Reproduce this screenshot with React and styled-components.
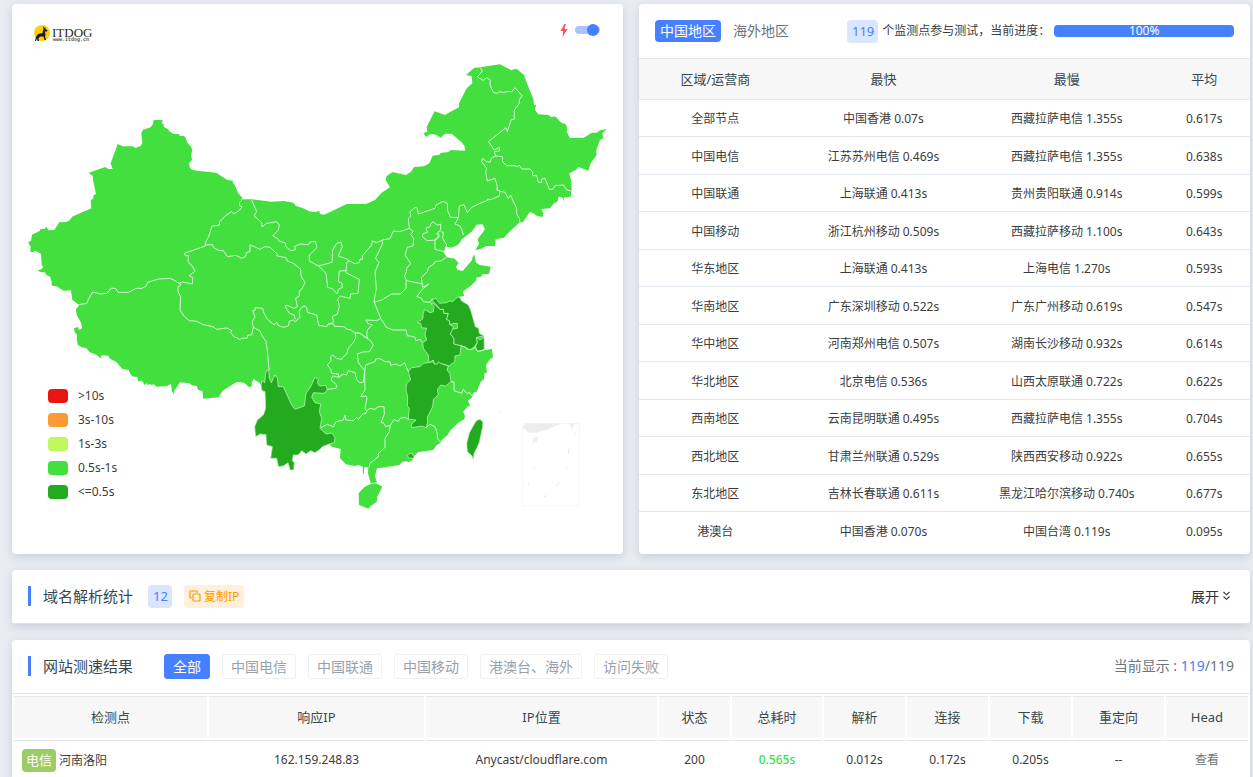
import React, { useState } from "react";
import styled, { createGlobalStyle } from "styled-components";

const regions = [
  ["全部节点", "中国香港 0.07s", "西藏拉萨电信 1.355s", "0.617s"],
  ["中国电信", "江苏苏州电信 0.469s", "西藏拉萨电信 1.355s", "0.638s"],
  ["中国联通", "上海联通 0.413s", "贵州贵阳联通 0.914s", "0.599s"],
  ["中国移动", "浙江杭州移动 0.509s", "西藏拉萨移动 1.100s", "0.643s"],
  ["华东地区", "上海联通 0.413s", "上海电信 1.270s", "0.593s"],
  ["华南地区", "广东深圳移动 0.522s", "广东广州移动 0.619s", "0.547s"],
  ["华中地区", "河南郑州电信 0.507s", "湖南长沙移动 0.932s", "0.614s"],
  ["华北地区", "北京电信 0.536s", "山西太原联通 0.722s", "0.622s"],
  ["西南地区", "云南昆明联通 0.495s", "西藏拉萨电信 1.355s", "0.704s"],
  ["西北地区", "甘肃兰州联通 0.529s", "陕西西安移动 0.922s", "0.655s"],
  ["东北地区", "吉林长春联通 0.611s", "黑龙江哈尔滨移动 0.740s", "0.677s"],
  ["港澳台", "中国香港 0.070s", "中国台湾 0.119s", "0.095s"],
];

const legend = [
  { color: "#e81512", text: ">10s" },
  { color: "#f99a35", text: "3s-10s" },
  { color: "#bff75f", text: "1s-3s" },
  { color: "#42df3f", text: "0.5s-1s" },
  { color: "#24aa1e", text: "<=0.5s" },
];

const filters = ["全部", "中国电信", "中国联通", "中国移动", "港澳台、海外", "访问失败"];

const resultColumns = [
  { title: "检测点", width: 193 },
  { title: "响应IP", width: 215 },
  { title: "IP位置", width: 231 },
  { title: "状态", width: 71 },
  { title: "总耗时", width: 90 },
  { title: "解析", width: 81 },
  { title: "连接", width: 81 },
  { title: "下载", width: 81 },
  { title: "重定向", width: 91 },
  { title: "Head", width: 82 },
];

// The map is stored in sheets, each with its own origin.
const sheets = {
  a: [36, 330],
  b: [600, 540],
  c: [1200, 165],
  d: [1140, 600],
  e: [180, 810],
  f: [720, 990],
  g: [1140, 990],
};

// trace("a", "1,2 3,4", "b", "5,6") joins pieces of several sheets to one line
const trace = (...parts) => {
  const points = [];
  for (let i = 0; i < parts.length; i += 2) {
    const [dx, dy] = sheets[parts[i]];
    parts[i + 1].split(" ").forEach((pair) => {
      const [x, y] = pair.split(",").map(Number);
      points.push(`${x + dx},${y + dy}`);
    });
  }
  return points.join(" ");
};

const mainland = trace(
  "a",
  "692,265 678,248 668,224 664,222 662,212 645,209 612,188 555,182 537,178 532,168 532,158 540,150 537,135 541,122 538,112 526,98 520,82 515,77 504,78 500,72 484,72 472,64 468,58 455,50 455,42 449,40 452,30 425,30 423,42 416,52 392,60 388,70 391,98 386,108 370,114 362,109 332,109 317,102 296,160 302,177 289,177 280,171 230,188 242,198 244,215 252,252 244,256 244,266 236,270 238,295 180,320 174,330 163,336 142,337 127,360 109,361 104,350 97,357 86,356 84,362 60,374 57,392 48,397 56,410 55,425 63,427 70,422 87,431 89,465 94,470 88,478 77,481 86,487 99,487 103,495 114,500 119,515 119,527 134,529 155,542 176,541",
  "e",
  "33,62 37,90 58,105 48,118 50,135 64,160 66,175 58,180 53,171 42,175 44,186 51,195 50,208 54,225 65,232 80,235 88,246 110,255 122,265 125,256 145,257 148,265 170,277 187,297 206,300 212,314 220,320 232,320 234,333 246,332 254,345 260,340 265,346 270,341 276,346 280,342 290,350 322,348 333,341 336,365 341,372 343,362 360,337 388,340 396,346 411,348 414,360 427,363 430,386 476,382 488,362 530,336 552,338 568,352 576,348 575,338 581,327 598,338",
  "f",
  "63,165 66,182 75,185 77,235 70,255 52,270 44,290 47,320 60,312 78,314 80,345 97,350 92,385 110,385 115,410 130,408 144,398 150,420 161,420 163,398 157,392 160,375 175,375 185,362 198,372 212,362 225,368 240,358 247,350 268,342 275,350 302,357 300,385 318,403 345,408 356,405 368,410 369,432 371,432 373,412 385,412 384,430 392,460 411,458 405,438 411,415 435,412 460,408 478,405 488,395 500,394 506,397 517,391 522,378 535,366 555,364 580,360 590,345 600,340",
  "g",
  "180,340 185,330 203,315 210,302 235,278 252,268 255,258 250,245 262,230 270,227 264,212 275,203 280,188 290,185 302,155 312,148 313,130 321,128 318,105 330,88 339,82 336,57",
  "d",
  "313,450 312,408 298,400 296,385 286,380 272,330 265,315 245,303 238,290 253,288 248,275 275,255 290,240 288,233 303,230 308,222 327,222 332,200 300,195 288,188 283,163 278,172 275,182 255,205 248,213 232,209 228,200 236,190 224,176 200,172 190,155 200,140 212,143 228,138 240,128 245,118 275,95 290,74 308,73 315,88 293,118 297,132 286,150 300,148 320,138 345,138 347,118 372,113 385,98 418,68",
  "c",
  "370,500 390,470 402,476 410,482 428,486 430,475 424,462 450,460 462,445 472,440 476,425 485,426 495,441 490,428 512,425 515,405 514,380 508,355 527,345 535,336 565,347 572,325 590,300 588,288 600,255 610,250 607,235 620,222 600,226 590,233 575,233 552,248 510,249 500,230 502,218 496,206 486,205 465,184 455,187 445,180 415,178 405,165 408,150 402,150 400,132 393,115 383,90 372,60 352,43 343,42 335,46 300,28 240,37 222,39 198,60 215,64 217,85 200,100 176,147 178,157 155,168 135,180 104,169 80,215 82,230 70,234 78,246 90,238 105,238 122,248 135,236 155,236 185,262 193,272 196,287 152,285 145,291 122,294 118,299 98,302 88,325 72,334 42,336 33,350 18,360 0,356",
  "b",
  "578,-24 560,-12 557,0 570,22 545,38 525,60 500,71 440,72 373,104 360,102 358,93 345,96 328,94 308,84 288,78 280,68 252,63 215,65 155,58 128,58"
);

const fastAreas = [
  // 云南
  trace(
    "f",
    "63,165 66,152 74,158 78,125 86,120 88,145 94,158 105,135 112,145 115,170 130,170 155,225 165,238 193,228 198,190 212,170 225,142 235,148 232,158 238,168 258,166 262,182 250,190 220,188 215,202 225,218 242,222 238,245 245,265 240,295 258,312 275,309 285,322 283,338 268,342 247,350 240,358 225,368 212,362 198,372 185,362 175,375 160,375 157,392 163,398 161,420 150,420 144,398 130,408 115,410 110,385 92,385 97,350 80,345 78,314 60,312 47,320 44,290 52,270 70,255 77,235 75,185 66,182"
  ),
  // 江西
  trace(
    "g",
    "85,125 95,113 120,110 130,100 145,98 158,95 165,103 172,92 188,102 205,108 201,120 210,132 213,155 197,168 182,165 172,180 175,195 160,208 158,230 150,245 142,262 143,278 138,293 125,288 95,293 93,285 108,270 85,267 88,235 82,228 83,200 78,180 80,160 92,150"
  ),
  // 安徽
  trace(
    "d",
    "152,310 162,312 180,328 190,328 192,340 205,340 200,358 208,362 210,374 220,380 218,392 211,402 222,415 222,432 243,437 240,465 225,468 224,485 207,498 190,492 180,490 176,485 172,492 163,492 160,480 147,488 145,465 130,445 128,428 140,420 135,403 140,385 125,383 122,370 112,368 128,357 130,340 134,328 150,338 160,335 162,320"
  ),
  // 江苏
  trace(
    "d",
    "155,300 168,295 178,310 200,308 208,303 218,305 228,295 238,290 245,303 265,315 272,330 286,380 296,385 298,400 312,408 290,412 292,428 283,440 270,450 243,437 222,432 222,415 211,402 218,387 232,385 232,370 222,370 210,374 208,362 200,358 205,340 192,340 190,328 180,328 170,315"
  ),
  // 上海
  trace("d", "290,412 300,420 312,412 313,448 295,455 285,443 292,428"),
  // 台湾
  trace("g", "285,278 292,270 300,268 309,276 308,290 298,338 282,372 280,391 276,378 262,365 260,340 268,308"),
  // 香港
  trace("f", "503,376 510,370 517,370 519,377 524,381 517,385 505,384"),
];

const hainan = trace("f", "372,472 390,463 408,459 427,470 412,500 410,515 392,528 385,536 357,525 356,490");

const borders = [
  trace(
    "a",
    "692,265 690,270 682,278 683,287 690,290 683,300 665,312 658,305 640,318 623,335 622,346 600,348 590,380 580,398 580,408 517,430 521,438 529,436 528,455 540,468 550,483 532,497 542,503 541,522 512,516 500,520 492,514 475,505 440,507 406,517 403,528 390,535 372,535 350,547 318,547 312,536 298,534 285,550 265,552 242,546 228,570",
    "e",
    "83,97 78,101 58,103"
  ),
  trace(
    "e",
    "350,36 362,42 360,48 354,50 354,65 362,80 360,120 372,138 388,152 410,154 430,164 458,170 470,178 500,174 516,182 511,187 524,202 534,204 539,210 545,204 561,205 564,195 575,195 580,172"
  ),
  trace("e", "580,172 600,183 605,195 618,215 622,240 627,300"),
  trace(
    "b",
    "160,442 157,425 165,410 158,392 166,390 165,383 188,385 190,395 200,415 222,435 230,426 234,436 250,442 265,438 268,424 280,420 285,425 300,412 297,395 302,385 312,378 320,382 322,397 350,405 356,436 380,440 386,430 400,432"
  ),
  trace(
    "b",
    "285,418 283,405 268,400 255,378 262,376 282,385 292,380 287,355 298,348 298,332 305,328 315,308 303,288 302,268 280,250 262,243 258,233 232,228 230,220 210,202 195,200 180,208 150,194 150,215 140,217 136,230 125,235 108,226 82,230 70,212 58,212 40,203 38,194 17,195"
  ),
  trace(
    "b",
    "155,60 170,95 162,107 185,128 186,141 200,130 230,125 238,135 235,150 218,168 232,175 238,184 255,188 258,200 272,212 287,209 283,200 300,192 325,194 330,186 346,184 351,203 328,225 328,243 356,258 378,280 383,322 397,326 412,342 415,328 427,322 426,310 415,305 418,273 438,272"
  ),
  trace(
    "b",
    "356,258 396,247 398,210 410,190 422,186 427,200 415,228 440,237 448,243 465,251 478,248 480,238 487,238 487,228 515,195 517,183 530,188 548,180 570,176 580,153 600,155 628,145"
  ),
  trace(
    "b",
    "450,242 440,248 438,278 478,298 474,340 452,342 450,355 420,348 413,358 418,378 412,402 397,410 401,425 385,435"
  ),
  trace("b", "400,432 404,439 432,440 442,448 455,450 462,458 480,460 503,475"),
  trace("b", "545,180 548,190 527,235 537,248 525,275 529,325 522,365 542,415 560,443 580,450 618,450 622,468 632,468 645,472 648,482 660,478 667,487"),
  trace("b", "522,367 545,360 575,342 600,342 618,325 618,300"),
  trace("b", "542,415 530,422 498,420 503,430 517,435 503,448 500,462 503,475"),
  trace("d", "88,85 100,95 92,103 101,115 99,138 82,142 75,165 92,190 80,205 79,215 73,230 80,242 130,252"),
  trace(
    "d",
    "198,172 185,182 165,185 162,192 145,203 142,215 124,233 128,262 146,252 125,270 110,290 125,295 130,305 150,307 155,298 158,297"
  ),
  trace(
    "d",
    "160,65 172,76 182,72 182,90 173,98 178,104 168,120 140,122 127,108 130,100 142,98 138,85 150,80 152,72 160,65"
  ),
  trace("d", "182,95 190,97 188,115 200,135 193,155 165,148 165,118 178,110 170,102 176,98"),
  trace(
    "d",
    "88,85 85,55 92,50 90,35 105,22 112,25 115,42 135,35 165,25 168,15 190,4 202,10 203,32 211,52 235,53 225,72 240,78 245,88 250,105"
  ),
  trace(
    "d",
    "235,53 238,18 252,14 262,38 275,22 300,10 325,0",
    "c",
    "262,433 275,433 298,423 300,408 290,405 292,395 285,370 262,378 257,352 260,340 245,320 248,310 260,320 270,322 274,310 287,303"
  ),
  trace("c", "298,408 315,412 325,430 332,420 338,435 350,460 350,478 358,490 360,502"),
  trace(
    "c",
    "287,303 307,305 308,320 320,332 345,332 352,335 357,330 366,342 390,342 398,350 398,362 410,362 415,382 425,382 425,372 435,370 448,403 458,403 465,392 490,390 500,405 514,408"
  ),
  trace(
    "c",
    "287,303 283,290 298,288 298,278 283,285 265,260 318,218 322,230 333,195 343,192 343,165 358,145 358,135 366,122 345,98 335,110 320,110 310,113 300,110 290,115 280,112 270,90 271,75 260,68 250,76 232,66 247,48 240,37"
  ),
  trace(
    "f",
    "345,8 348,20 342,35 325,55 320,72 308,82 305,88 290,85 278,75 272,80 273,92 262,105 272,118 275,130 295,132 297,142 278,138 273,150 290,165 288,175 262,178"
  ),
  trace("f", "295,142 310,132 320,135 325,122 345,128 350,148 358,158 370,157 374,122"),
  trace("f", "345,8 360,10 380,25 392,32 400,45 388,65 368,66 352,72 355,98 374,122 375,180 362,200 378,198 381,205 375,235 380,242"),
  trace("f", "380,242 378,250 368,252 355,268 350,262 340,272 318,270 315,256 310,270 288,275 280,290 262,283 243,293"),
  trace("f", "374,122 377,105 405,95 408,86 420,86 435,95 450,96 452,106 468,102 480,108 495,98 498,110 505,125"),
  trace("f", "380,242 390,235 405,238 415,230 432,230 433,252 423,278 430,278 437,290 450,285"),
  trace("f", "505,268 495,262 480,265 475,275 462,268 450,288 448,305 435,325 435,352 415,370 415,380 390,400 387,412"),
  trace("g", "138,293 150,283 165,290 172,310 172,325 180,335"),
  trace("g", "213,155 222,156 222,182 245,190 250,178 260,190 270,188 275,198"),
  trace("g", "243,47 258,52 262,58 278,58 286,50 292,64 313,60"),
  trace("f", "390,462 412,458"),
];

const ChinaMap = () => (
  <MapSvg viewBox="72 180 1761 1365" role="img" aria-label="中国地图">
    <polygon points={mainland} fill="#42df3f" />
    <polygon points={hainan} fill="#42df3f" />
    {fastAreas.map((points) => (
      <polygon key={points} points={points} fill="#24aa1e" stroke="#d5f5d4" strokeWidth="2" />
    ))}
    {borders.map((points) => (
      <polyline key={points} points={points} fill="none" stroke="#d5f8d4" strokeWidth="3" strokeLinejoin="round" />
    ))}
    {/* 南海诸岛 */}
    <g transform="translate(1140 990)" fill="#ededed">
      <rect x="428" y="281" width="170" height="246" fill="none" stroke="#f5f5f5" strokeWidth="3" />
      <path d="M428 290L438 280L545 281L530 286L505 298L470 308L445 308Z" />
      <path d="M568 280H584L577 300Z" />
      <path d="M462 322L476 320L469 337L456 340Z" />
      <path d="M592 298L582 314L586 314Z" />
      <path d="M564 356H568V372H564Z" />
      <path d="M471 403L458 419L462 419Z" />
      <path d="M567 400L556 417L561 416Z" />
      <path d="M444 450L448 464L443 462Z" />
      <path d="M541 450L527 469L532 468Z" />
      <path d="M486 500L501 495L497 501Z" />
      <path d="M357 249L362 243L363 249Z" />
    </g>
  </MapSvg>
);

const Logo = () => (
  <svg width="60" height="20" viewBox="0 0 60 20" role="img" aria-label="ITDOG">
    <circle cx="8" cy="9" r="8" fill="#ffcf0a" />
    <path
      d="M1 17L2 13L4 10L8.500 9L9.500 5L9 2L10.500 4L11.200 3L11.500 5L13.500 6.500L13 7.500L11 7.500L11.500 11L11 12L12 16H10.500L9.500 12.500L6 12.500L4.500 14.500L5 17H3.500L3 14.500L2 17Z"
      fill="#1d1a16"
    />
    <LogoName x="18" y="13">ITDOG</LogoName>
    <LogoSite x="19" y="17">www.itdog.cn</LogoSite>
  </svg>
);

const CopyIcon = () => (
  <svg width="12" height="12" viewBox="0 0 12 12" fill="none" stroke="currentColor" strokeWidth="1.2" aria-hidden="true">
    <rect x="4" y="4" width="7" height="7" rx="1" />
    <path d="M3 8H1.600Q1 8 1 7.400V1.600Q1 1 1.600 1H7.400Q8 1 8 1.600V3" />
  </svg>
);

const DoubleDown = () => (
  <svg width="9" height="10" viewBox="0 0 9 10" fill="none" stroke="currentColor" strokeWidth="1.1" aria-hidden="true">
    <path d="M1.500 1L4.500 3.800L7.500 1M1.500 5.500L4.500 8.300L7.500 5.500" />
  </svg>
);

export default function App() {
  const [fast, setFast] = useState(true);
  const [filter, setFilter] = useState("全部");
  const [area, setArea] = useState("中国地区");

  return (
    <Page>
      <GlobalStyle />
      <TopGrid>
        <MapCard>
          <MapHeader>
            <Logo />
            <SwitchLabel>
              <svg width="8" height="13" viewBox="0 0 8 13" aria-hidden="true">
                <path d="M4.500 0L0.500 7H3.200L2.500 13L7.500 5H4.300L6 0Z" fill="#ff4d55" />
              </svg>
              <Switch
                type="checkbox"
                aria-label="快速"
                checked={fast}
                onChange={(e) => setFast(e.target.checked)}
              />
            </SwitchLabel>
          </MapHeader>
          <ChinaMap />
          <Legend>
            {legend.map((item) => (
              <LegendItem key={item.text} $color={item.color}>
                {item.text}
              </LegendItem>
            ))}
          </Legend>
        </MapCard>

        <StatsCard>
          <StatsHeader>
            <AreaTabs>
              {["中国地区", "海外地区"].map((name) => (
                <AreaTab key={name} type="button" $active={area === name} onClick={() => setArea(name)}>
                  {name}
                </AreaTab>
              ))}
            </AreaTabs>
            <Badge>119</Badge>
            <ProgressText>个监测点参与测试，当前进度：</ProgressText>
            <Progress>100%</Progress>
          </StatsHeader>
          <RegionTable>
            <colgroup>
              <col width="25%" />
              <col width="30%" />
              <col width="30%" />
              <col width="15%" />
            </colgroup>
            <thead>
              <tr>
                <th>区域/运营商</th>
                <th>最快</th>
                <th>最慢</th>
                <th>平均</th>
              </tr>
            </thead>
            <tbody>
              {regions.map((row) => (
                <tr key={row[0]}>
                  {row.map((cell, index) => (
                    <td key={index}>{cell}</td>
                  ))}
                </tr>
              ))}
            </tbody>
          </RegionTable>
        </StatsCard>
      </TopGrid>

      <Card>
        <SectionHeader>
          <Title>域名解析统计</Title>
          <Badge>12</Badge>
          <CopyButton type="button">
            <CopyIcon />
            复制IP
          </CopyButton>
          <ExpandButton type="button">
            展开
            <DoubleDown />
          </ExpandButton>
        </SectionHeader>
      </Card>

      <Card>
        <SectionHeader>
          <Title>网站测速结果</Title>
          <Filters>
            {filters.map((name) => (
              <FilterButton key={name} type="button" $active={filter === name} onClick={() => setFilter(name)}>
                {name}
              </FilterButton>
            ))}
          </Filters>
          <Shown>
            当前显示 : <span>119</span>/119
          </Shown>
        </SectionHeader>
        <ResultTable>
          <thead>
            <tr>
              {resultColumns.map((column) => (
                <ResultHead key={column.title} $width={column.width}>
                  {column.title}
                </ResultHead>
              ))}
            </tr>
          </thead>
          <tbody>
            <tr>
              <Place>
                <Isp>电信</Isp>
                河南洛阳
              </Place>
              <td>162.159.248.83</td>
              <td>Anycast/cloudflare.com</td>
              <td>200</td>
              <Total>0.565s</Total>
              <td>0.012s</td>
              <td>0.172s</td>
              <td>0.205s</td>
              <td>--</td>
              <td>
                <HeadLink href="#head">查看</HeadLink>
              </td>
            </tr>
          </tbody>
        </ResultTable>
      </Card>
    </Page>
  );
}

const GlobalStyle = createGlobalStyle`
  * {
    box-sizing: border-box;
  }
  html {
    overflow: hidden;
  }
  body {
    margin: 0;
    background: #e9edf2;
    color: #3c3c3c;
    font-family: "Noto Sans", "Noto Sans CJK SC", sans-serif;
    font-size: 12px;
    line-height: 18px;
  }
  button {
    font-family: inherit;
    border: none;
    padding: 0;
    background: none;
    cursor: pointer;
  }
`;

const Page = styled.main`
  display: flex;
  flex-direction: column;
  gap: 16px;
  padding: 4px 3px 0 12px;
`;

const TopGrid = styled.div`
  display: grid;
  grid-template-columns: 1fr 1fr;
  gap: 16px;
`;

const Card = styled.section`
  background: #fff;
  border-radius: 4px;
  box-shadow: 0 3px 10px rgba(140, 150, 175, 0.35);
`;

const MapCard = styled(Card)`
  position: relative;
  padding: 0 12px;
`;

const StatsCard = styled(Card)`
  padding-bottom: 4px;
`;

const MapHeader = styled.header`
  display: flex;
  justify-content: space-between;
  align-items: center;
  height: 56px;
  padding: 4px 11px 0 10px;
`;

const LogoName = styled.text`
  font-family: "Liberation Serif", serif;
  font-size: 13px;
  fill: #2d2926;
`;

const LogoSite = styled.text`
  font-family: "Liberation Mono", monospace;
  font-size: 5px;
  font-weight: bold;
  fill: #555;
`;

const SwitchLabel = styled.label`
  display: flex;
  align-items: center;
  gap: 7px;
  padding-bottom: 8px;
`;

const Switch = styled.input`
  appearance: none;
  position: relative;
  width: 25px;
  height: 8px;
  margin: 0;
  border-radius: 4px;
  background: ${(props) => (props.checked ? "#a9c4ff" : "#ccc")};
  cursor: pointer;

  &::before {
    content: "";
    position: absolute;
    top: -2px;
    left: ${(props) => (props.checked ? "12px" : "0")};
    width: 12px;
    height: 12px;
    border-radius: 50%;
    background: #467fff;
  }
`;

const MapSvg = styled.svg`
  display: block;
  width: 100%;
  height: auto;
`;

const Legend = styled.ul`
  position: absolute;
  left: 36px;
  bottom: 50px;
  margin: 0;
  padding: 0;
  list-style: none;
`;

const LegendItem = styled.li`
  display: flex;
  align-items: center;
  gap: 10px;
  height: 24px;

  &::before {
    content: "";
    width: 20px;
    height: 14px;
    border-radius: 4px;
    background: ${(props) => props.$color};
  }
`;

const StatsHeader = styled.header`
  display: flex;
  align-items: center;
  height: 54px;
  padding: 0 16px;
`;

const AreaTabs = styled.nav`
  display: flex;
  gap: 7px;
  margin-right: 53px;
`;

const AreaTab = styled.button`
  height: 22px;
  && {
    padding: 0 5px;
  }
  border-radius: 4px;
  font-size: 14px;
  line-height: 22px;
  white-space: nowrap;
  color: ${(props) => (props.$active ? "#fff" : "#6c757d")};
  && {
    background: ${(props) => (props.$active ? "#467fff" : "none")};
  }
`;

const Badge = styled.span`
  padding: 0 4px 0 5px;
  border-radius: 4px;
  background: #dae5ff;
  color: #467fff;
  font-size: 13px;
  line-height: 23px;
`;

const ProgressText = styled.span`
  margin: 0 4px;
  white-space: nowrap;
`;

const Progress = styled.div`
  flex: 1;
  height: 12px;
  border-radius: 4px;
  background: #467fff;
  color: #fff;
  line-height: 12px;
  text-align: center;
`;

const RegionTable = styled.table`
  width: 100%;
  table-layout: fixed;
  border-collapse: collapse;
  text-align: center;

  th {
    height: 41px;
    padding: 0;
    border-top: 1px solid #e3e8ee;
    background: #f7f7f7;
    color: #37474f;
    font-size: 13px;
    font-weight: 400;
  }
  td {
    height: 38px;
    padding: 2px 0 0;
    border-top: 1px solid #e3e8ee;
  }
  tr:nth-child(odd) td {
    height: 37px;
  }
`;

const SectionHeader = styled.header`
  display: flex;
  align-items: center;
  height: 54px;
  padding: 0 16px;
  border-bottom: 1px solid #dfe4ea;
`;

const Title = styled.h2`
  margin: 0 15px 0 0;
  padding-left: 12px;
  border-left: 3px solid #467fff;
  color: #37474f;
  font-size: 15px;
  font-weight: 400;
  line-height: 20px;
`;

const CopyButton = styled.button`
  display: flex;
  align-items: center;
  gap: 3px;
  margin-left: 12px;
  border-radius: 4px;
  color: #ff9800;
  font-size: 12px;
  line-height: 23px;
  && {
    padding: 0 5px;
    background: #fff0dc;
  }
`;

const ExpandButton = styled.button`
  display: flex;
  align-items: center;
  gap: 3px;
  margin-left: auto;
  margin-right: 3px;
  color: #333;
  font-size: 14px;
`;

const Filters = styled.div`
  display: flex;
  gap: 12px;
  margin-left: 16px;
`;

const FilterButton = styled.button`
  && {
    padding: 0 8px;
    border: 1px solid ${(props) => (props.$active ? "#467fff" : "#eef0f2")};
    background: ${(props) => (props.$active ? "#467fff" : "#fff")};
  }
  border-radius: 3px;
  color: ${(props) => (props.$active ? "#fff" : "#98a1a9")};
  font-size: 14px;
  line-height: 23px;
  white-space: nowrap;
`;

const Shown = styled.p`
  margin: 0 0 0 auto;
  color: #6c757d;
  font-size: 14px;

  span {
    color: #467fff;
  }
`;

const ResultTable = styled.table`
  width: 100%;
  table-layout: fixed;
  border-spacing: 2px;
  text-align: center;

  td {
    height: 38px;
    padding: 2px 0 0;
    border-top: 1px solid #e3e8ee;
  }
`;

const ResultHead = styled.th`
  width: ${(props) => props.$width}px;
  height: 42px;
  padding: 0;
  border-top: 1px solid #e3e8ee;
  background: #f7f7f7;
  color: #37474f;
  font-size: 13px;
  font-weight: 400;
`;

const Place = styled.td`
  text-align: left;
  && {
    padding-left: 8px;
  }
`;

const Isp = styled.span`
  display: inline-block;
  margin-right: 3px;
  padding: 0 4px;
  border-radius: 4px;
  background: #9ccc65;
  color: #fff;
  font-size: 13px;
  line-height: 23px;
`;

const Total = styled.td`
  color: #42df3f;
  font-weight: 500;
`;

const HeadLink = styled.a`
  color: #6c757d;
  text-decoration: none;
`;
